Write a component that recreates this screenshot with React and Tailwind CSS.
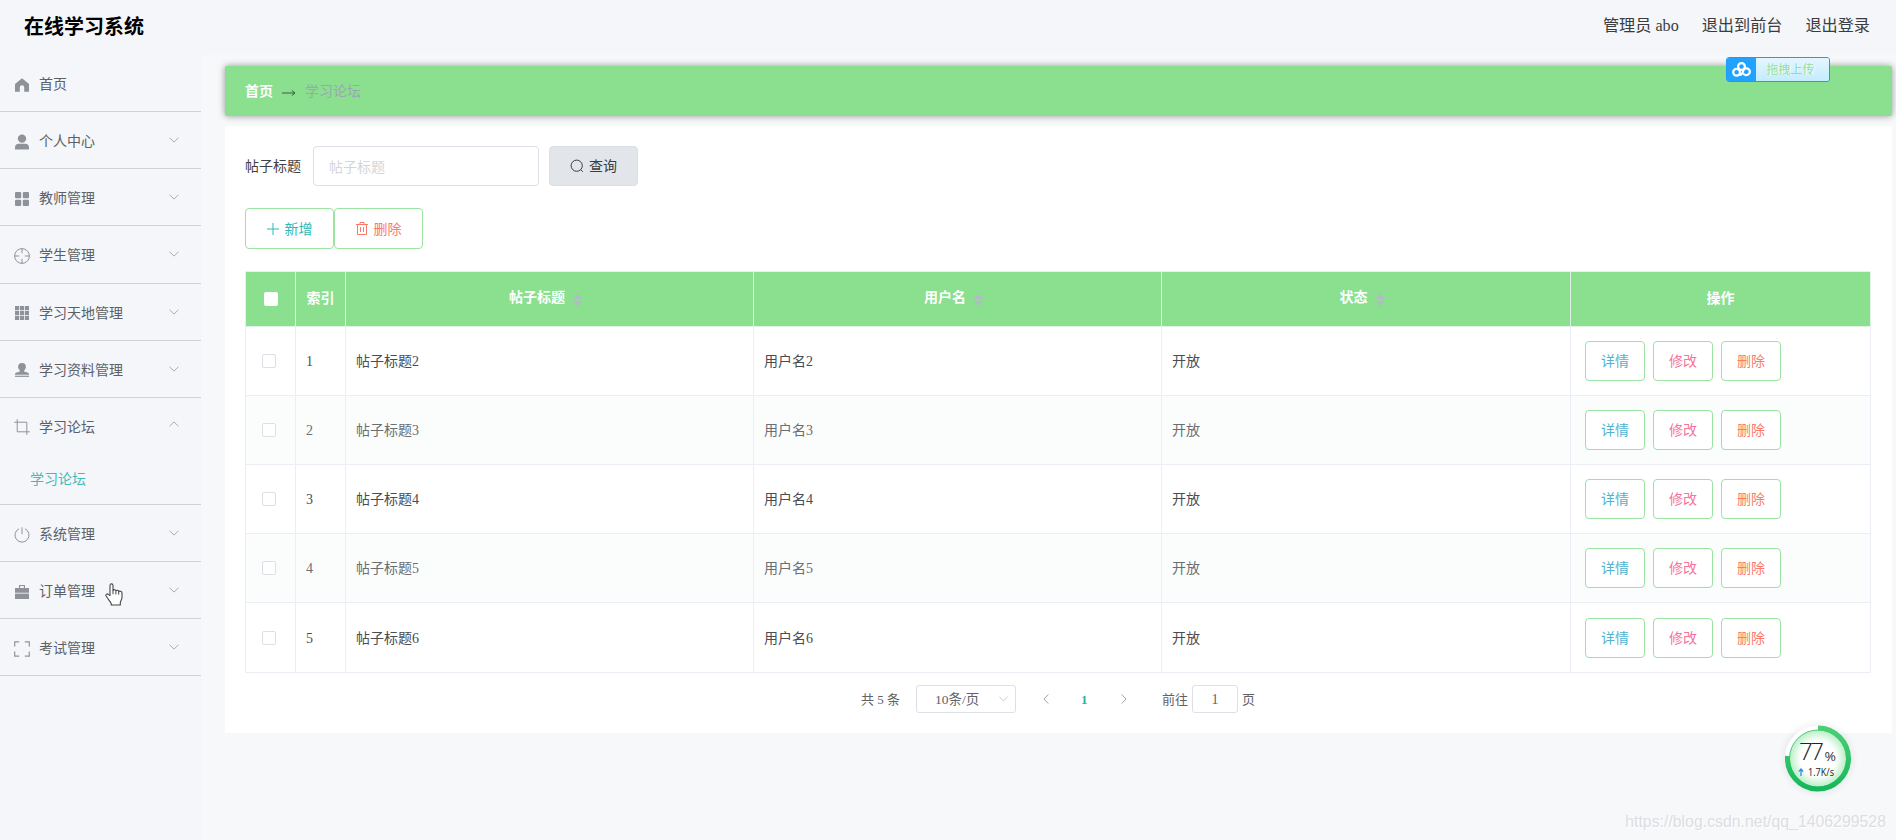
import React from 'react';

const menus = [
  { name: '首页', icon: 'home', leaf: true },
  { name: '个人中心', icon: 'user' },
  { name: '教师管理', icon: 'menu' },
  { name: '学生管理', icon: 'aim' },
  { name: '学习天地管理', icon: 'grid' },
  { name: '学习资料管理', icon: 'custom' },
  { name: '学习论坛', icon: 'crop', children: ['学习论坛'] },
  { name: '系统管理', icon: 'power' },
  { name: '订单管理', icon: 'cart' },
  { name: '考试管理', icon: 'screen' },
];

const rows = [
  { id: 1, title: '帖子标题2', user: '用户名2', status: '开放' },
  { id: 2, title: '帖子标题3', user: '用户名3', status: '开放' },
  { id: 3, title: '帖子标题4', user: '用户名4', status: '开放' },
  { id: 4, title: '帖子标题5', user: '用户名5', status: '开放' },
  { id: 5, title: '帖子标题6', user: '用户名6', status: '开放' },
];

const shapes = {
  home: <path fill="currentColor" d="M8 1.2 15 7v7.8H10.2V10.4a2.2 2.2 0 0 0-4.4 0v4.4H1V7z" />,
  user: (
    <g fill="currentColor">
      <circle cx="8" cy="4.6" r="4.2" />
      <path d="M1 15.4v-2.2C1 11 2.6 9.8 4.6 9.8h6.8c2 0 3.6 1.2 3.6 3.4v2.2z" />
    </g>
  ),
  menu: (
    <g fill="currentColor">
      <rect x="1" y="1" width="6.2" height="6.2" rx="1" />
      <rect x="8.8" y="1" width="6.2" height="6.2" rx="1" />
      <rect x="1" y="8.8" width="6.2" height="6.2" rx="1" />
      <rect x="8.8" y="8.8" width="6.2" height="6.2" rx="1" />
    </g>
  ),
  aim: (
    <g fill="none" stroke="currentColor">
      <circle cx="8" cy="8" r="7.4" />
      <path d="M8 .6v4.6M8 10.8v4.6M.6 8h4.6M10.8 8h4.6" />
    </g>
  ),
  grid: (
    <g fill="currentColor">
      <path d="M1 1h4.2v4.2H1zM6 1h4v4.2H6zM10.8 1H15v4.2h-4.2zM1 6h4.2v4H1zM6 6h4v4H6zM10.8 6H15v4h-4.2zM1 10.8h4.2V15H1zM6 10.8h4V15H6zM10.8 10.8H15V15h-4.2z" />
    </g>
  ),
  custom: (
    <g fill="currentColor">
      <path d="M8 1a3.9 3.9 0 0 1 3.9 3.9c0 1.6-1.2 2.6-1.7 3.6-.2.8.3 1.2 1 1.4l2.3.5c1 .3 1.5.9 1.5 1.8v.6H1v-.6c0-.9.5-1.5 1.5-1.8l2.3-.5c.7-.2 1.2-.6 1-1.4-.5-1-1.7-2-1.7-3.6A3.900 3.900 0 0 1 8 1z" />
      <rect x="1" y="13.7" width="14" height="1.2" />
    </g>
  ),
  crop: <path fill="none" stroke="currentColor" d="M3.2.2v12.6h12.6M.2 3.2h12.6v12.6" />,
  power: <path fill="none" stroke="currentColor" d="M8 .3v7M5 1.8a7 7 0 1 0 6 0" />,
  cart: (
    <g fill="currentColor">
      <path d="M5 1h6v3h4v4.8H1V4h4zM6.2 2.1V4h3.6V2.1z" fillRule="evenodd" />
      <path d="M1 9.6h14V15H1z" />
    </g>
  ),
  screen: <path fill="none" stroke="currentColor" strokeWidth="1.2" d="M.7 5.4V.9h4.5M10.8.9h4.5v4.5M15.3 10.6v4.5h-4.5M5.2 15.1H.7v-4.5" />,
};

const MenuIcon = ({ name }) => (
  <svg className="w-4 h-4 mt-[3px] text-[#8f9399]" viewBox="0 0 16 16">{shapes[name]}</svg>
);

const Chevron = ({ className }) => (
  <svg className={className} viewBox="0 0 10 6" fill="none" stroke="currentColor">
    <path d="M.5.7 5 5.1 9.5.7" />
  </svg>
);

const SortIcon = () => (
  <svg className="w-[9px] h-3 ml-2 mr-2 mt-1 text-[#b3b9c9]" viewBox="0 0 9 12" fill="currentColor">
    <path d="M4.500 0 9 5H0zM4.500 12 0 7h9z" />
  </svg>
);

const MenuItem = ({ item }) => (
  <li className="border-b border-[#d0d2d6]">
    <div className="h-[56.15px] flex items-center pl-3.5 pr-[22px]">
      <MenuIcon name={item.icon} />
      <span className="ml-[9px] flex-1 mt-1">{item.name}</span>
      {!item.leaf && (
        <Chevron className={item.children ? 'w-2.5 h-1.5 mb-1 text-[#a9acb1] rotate-180' : 'w-2.5 h-1.5 text-[#a9acb1]'} />
      )}
    </div>
    {item.children?.map((child) => (
      <div key={child} className="h-[50px] flex items-center pl-[30px] pt-0.5 text-[#3fbdbd]">{child}</div>
    ))}
  </li>
);

const Sidebar = () => (
  <aside className="w-[201px] shrink-0 bg-[#f4f6fa]">
    <ul className="text-sm text-[#5c6066]">
      {menus.map((item) => <MenuItem key={item.name} item={item} />)}
    </ul>
  </aside>
);

const HeadCell = ({ children, sortable }) => (
  <th className="border-r border-b border-[#dff3e4] font-bold p-0">
    <div className={sortable ? 'flex items-center justify-center -mt-0.5' : 'flex items-center justify-center'}>
      {children}
      {sortable && <SortIcon />}
    </div>
  </th>
);

const RowButton = ({ children, className }) => (
  <button className={`h-10 w-[60px] pt-0.5 rounded border border-[#9be3a0] bg-white ${className}`}>{children}</button>
);

const ForumTable = () => (
  <table className="w-[1626px] table-fixed border-separate border-spacing-0 border-l border-t border-[#ebeef5] text-sm text-left">
    <colgroup>
      <col className="w-[50px]" />
      <col className="w-[50px]" />
      <col className="w-[408px]" />
      <col className="w-[408px]" />
      <col className="w-[409px]" />
      <col className="w-[300px]" />
    </colgroup>
    <thead>
      <tr className="h-[55px] bg-[#8ae08f] text-white">
        <HeadCell><span className="w-3.5 h-3.5 bg-white rounded-xs" /></HeadCell>
        <HeadCell>索引</HeadCell>
        <HeadCell sortable>帖子标题</HeadCell>
        <HeadCell sortable>用户名</HeadCell>
        <HeadCell sortable>状态</HeadCell>
        <HeadCell>操作</HeadCell>
      </tr>
    </thead>
    <tbody>
      {rows.map((row) => (
        <tr
          key={row.id}
          className="h-[69px] last:h-[70px] text-[#4a4c50] even:bg-[#fafdfc] even:text-[#6b6e73] *:border-r *:border-b *:border-[#ebeef5] *:px-2.5 *:pb-0 *:pt-0.5"
        >
          <td><div className="w-3.5 h-3.5 -mt-0.5 ml-1.5 bg-white border border-[#dcdfe6] rounded-xs" /></td>
          <td>{row.id}</td>
          <td>{row.title}</td>
          <td>{row.user}</td>
          <td>{row.status}</td>
          <td>
            <div className="flex gap-2 pl-1 -mt-0.5">
              <RowButton className="text-[#4fb3cf]">详情</RowButton>
              <RowButton className="text-[#f5769a]">修改</RowButton>
              <RowButton className="text-[#fb7a6a]">删除</RowButton>
            </div>
          </td>
        </tr>
      ))}
    </tbody>
  </table>
);

const Pagination = () => (
  <div className="mt-3 ml-[616px] flex items-center h-7 text-[13px] text-[#606266]">
    <span className="w-[55px] mt-0.5">共 5 条</span>
    <div className="w-[100px] h-7 flex items-center justify-between pl-[18px] pr-[7px] border border-[#dcdfe6] rounded-[3px] text-sm">
      <span className="text-[13.5px] mt-0.5">10条/页</span>
      <Chevron className="w-[9px] h-1.5 text-[#c0c4cc]" />
    </div>
    <Chevron className="ml-[25px] w-2.5 h-1.5 rotate-90 text-[#9ea2a9]" />
    <span className="ml-[30px] mt-0.5 w-[7px] font-bold text-[#1cb9a0]">1</span>
    <Chevron className="ml-[31px] w-2.5 h-1.5 -rotate-90 text-[#9ea2a9]" />
    <span className="ml-[33px] w-[30px] mt-0.5">前往</span>
    <span className="w-[46px] h-7 pt-0.5 flex items-center justify-center border border-[#dcdfe6] rounded-[3px] text-sm">1</span>
    <span className="ml-1 mt-0.5">页</span>
  </div>
);

// floating drag-to-upload badge
const UploadBadge = () => (
  <div className="absolute left-[1726px] top-[57px] w-[104px] h-[25px] flex overflow-hidden rounded-[3px] border border-[#1a9cfb]">
    <div className="w-[29px] flex items-center justify-center bg-[#22a2ff]">
      <svg className="w-[19px] h-[15px]" viewBox="0 0 19 15" fill="none" stroke="white" strokeWidth="2.2" strokeLinecap="round">
        <circle cx="9.500" cy="4.500" r="3.400" />
        <circle cx="4.600" cy="10.200" r="3.400" />
        <path d="M12.200 12.300a3.400 3.400 0 1 0-1.200-2.600c-.2 1.500-1 2.500-2.200 3.200" />
      </svg>
    </div>
    <div className="flex-1 flex items-center justify-center pr-1 bg-linear-to-b from-[#e4f6ff] to-[#c4ecff] text-xs text-[#8be29b] [text-shadow:1px_0_0_#fff]">
      拖拽上传
    </div>
  </div>
);

const SpeedGauge = () => (
  <svg className="absolute left-[1777px] top-[718px] w-[82px] h-[82px]" viewBox="0 0 82 82">
    <defs>
      <radialGradient id="halo">
        <stop offset="0.75" stopColor="#000" stopOpacity="0.06" />
        <stop offset="1" stopColor="#000" stopOpacity="0" />
      </radialGradient>
      <radialGradient id="face">
        <stop offset="0.62" stopColor="#fff" />
        <stop offset="1" stopColor="#b8efc5" />
      </radialGradient>
      <linearGradient id="ring" x1="0" y1="0" x2="0" y2="1">
        <stop offset="0" stopColor="#4bcf74" />
        <stop offset="1" stopColor="#16b75c" />
      </linearGradient>
    </defs>
    <circle cx="41" cy="40.5" r="40" fill="url(#halo)" />
    <circle cx="41" cy="40.5" r="33" fill="#fff" />
    <circle cx="41" cy="40.5" r="28.5" fill="url(#face)" stroke="#52c684" />
    <path d="M41 10a30.5 30.5 0 1 1-30.4 28" fill="none" stroke="url(#ring)" strokeWidth="5" />
    <text x="22" y="42" fontSize="24" fontFamily="Open Sans, sans-serif" fontWeight="300" textLength="25" fill="#222">77</text>
    <text x="47.5" y="42.5" fontSize="13.5" fontFamily="Open Sans, sans-serif" textLength="11.5" lengthAdjust="spacingAndGlyphs" fill="#333">%</text>
    <path d="M24 58v-6.5M21.8 53.6 24 51l2.2 2.6" fill="none" stroke="#2a8df0" strokeWidth="1.3" />
    <text x="31" y="57.5" fontSize="10" fontFamily="Open Sans, sans-serif" textLength="26" lengthAdjust="spacingAndGlyphs" fill="#222">1.7K/s</text>
  </svg>
);

const HandCursor = () => (
  <svg className="absolute left-[105px] top-[583px] w-[18px] h-[23px]" viewBox="0 0 18 23">
    <path
      d="M5 12.5V2.4C5 .3 8 .3 8 2.4v5.2c.2-1.4 2.8-1.2 2.9.4.5-1.2 2.6-.9 2.8.6.7-.9 3.3-.6 3.3 1.3v4.3c0 2.6-1.7 3.8-1.7 5.6v2.2H6.2v-1.8C5 18.4 2.6 15.5 1 12.8c-.6-1.5 1.2-2.6 2.5-1.2z"
      fill="#fff" stroke="#44464b" strokeWidth="1.1" strokeLinejoin="round"
    />
    <path d="M8 7.6v3.6M10.9 8.4v3M13.7 9v2.6" stroke="#44464b" />
  </svg>
);

const App = () => {
  return (
    <div className="relative h-[840px] w-[1896px] overflow-hidden flex flex-col bg-[#f6f8fa] font-['Liberation_Serif','Noto_Sans_CJK_SC',serif]">
      <header className="h-[55px] shrink-0 flex items-center justify-between pl-6 pr-[26px] bg-[#f4f6fa]">
        <h1 className="text-xl font-bold text-black -mt-0.5">在线学习系统</h1>
        <nav className="flex gap-[23px] text-[16.15px] text-[#3a3c40] -mt-0.5">
          <span>管理员 abo</span>
          <span>退出到前台</span>
          <span>退出登录</span>
        </nav>
      </header>

      <div className="flex-1 flex">
        <Sidebar />
        <main className="ml-6 mt-[11px] w-[1667px] text-sm">
          {/* breadcrumb */}
          <div className="h-[50px] flex items-center pl-5 pt-0.5 rounded-xs bg-[#8ae08f] shadow-[0_0_7px_rgba(0,0,0,0.4)]">
            <span className="font-bold text-white">首页</span>
            <svg className="w-3.5 h-2 mx-[9px] mt-0.5" viewBox="0 0 14 8" fill="none" stroke="#3c5a40">
              <path d="M0 4h13M9.8 1.4 13 4 9.8 6.6" />
            </svg>
            <span className="text-[#97a8b4]">学习论坛</span>
          </div>

          <section className="mt-2.5 h-[607px] bg-white pl-5 pt-5">
            <div className="flex items-center h-10">
              <label className="w-[68px] mt-0.5 text-[#3f4145]">帖子标题</label>
              <input
                className="w-[226px] h-10 px-[15px] pt-[3px] border border-[#dcdfe6] rounded placeholder:text-[#d3d6dc]"
                placeholder="帖子标题"
              />
              <button className="ml-2.5 w-[89px] h-10 pt-0.5 flex items-center justify-center gap-[5px] rounded border border-[#dcdfe6] bg-[#e2e5ea] text-[#3a3c40]">
                <svg className="w-3.5 h-3.5 mb-0.5" viewBox="0 0 14 14" fill="none" stroke="currentColor">
                  <circle cx="6.7" cy="6.7" r="5.6" />
                  <path d="m10.7 10.7 2.1 2.1" />
                </svg>
                查询
              </button>
            </div>

            <div className="flex mt-[22px]">
              <button className="w-[89px] h-[41px] pt-0.5 flex items-center justify-center gap-1.5 rounded border border-[#9be3a0] text-[#2fb8b8]">
                <svg className="w-3 h-3 mb-0.5" viewBox="0 0 12 12" stroke="currentColor">
                  <path d="M6 0v12M0 6h12" />
                </svg>
                新增
              </button>
              <button className="w-[89px] h-[41px] pt-0.5 flex items-center justify-center gap-1.5 rounded border border-[#9be3a0] text-[#fb7a6a]">
                <svg className="w-3 h-[13px] mb-0.5" viewBox="0 0 12 13" fill="none" stroke="currentColor">
                  <path d="M0 2.5h12M4 2.5v-2h4v2M1.5 2.5v10h9v-10M4.5 5v5M7.5 5v5" />
                </svg>
                删除
              </button>
            </div>

            <div className="mt-[22px]">
              <ForumTable />
            </div>
            <Pagination />
          </section>
        </main>
      </div>

      <UploadBadge />
      <SpeedGauge />
      <HandCursor />
      <div className="absolute right-2.5 bottom-1.5 text-[15.85px] text-[#dcdee1] font-['Liberation_Sans',sans-serif] [text-shadow:1px_1px_0_#fff]">
        https://blog.csdn.net/qq_1406299528
      </div>
    </div>
  );
};

export default App;
